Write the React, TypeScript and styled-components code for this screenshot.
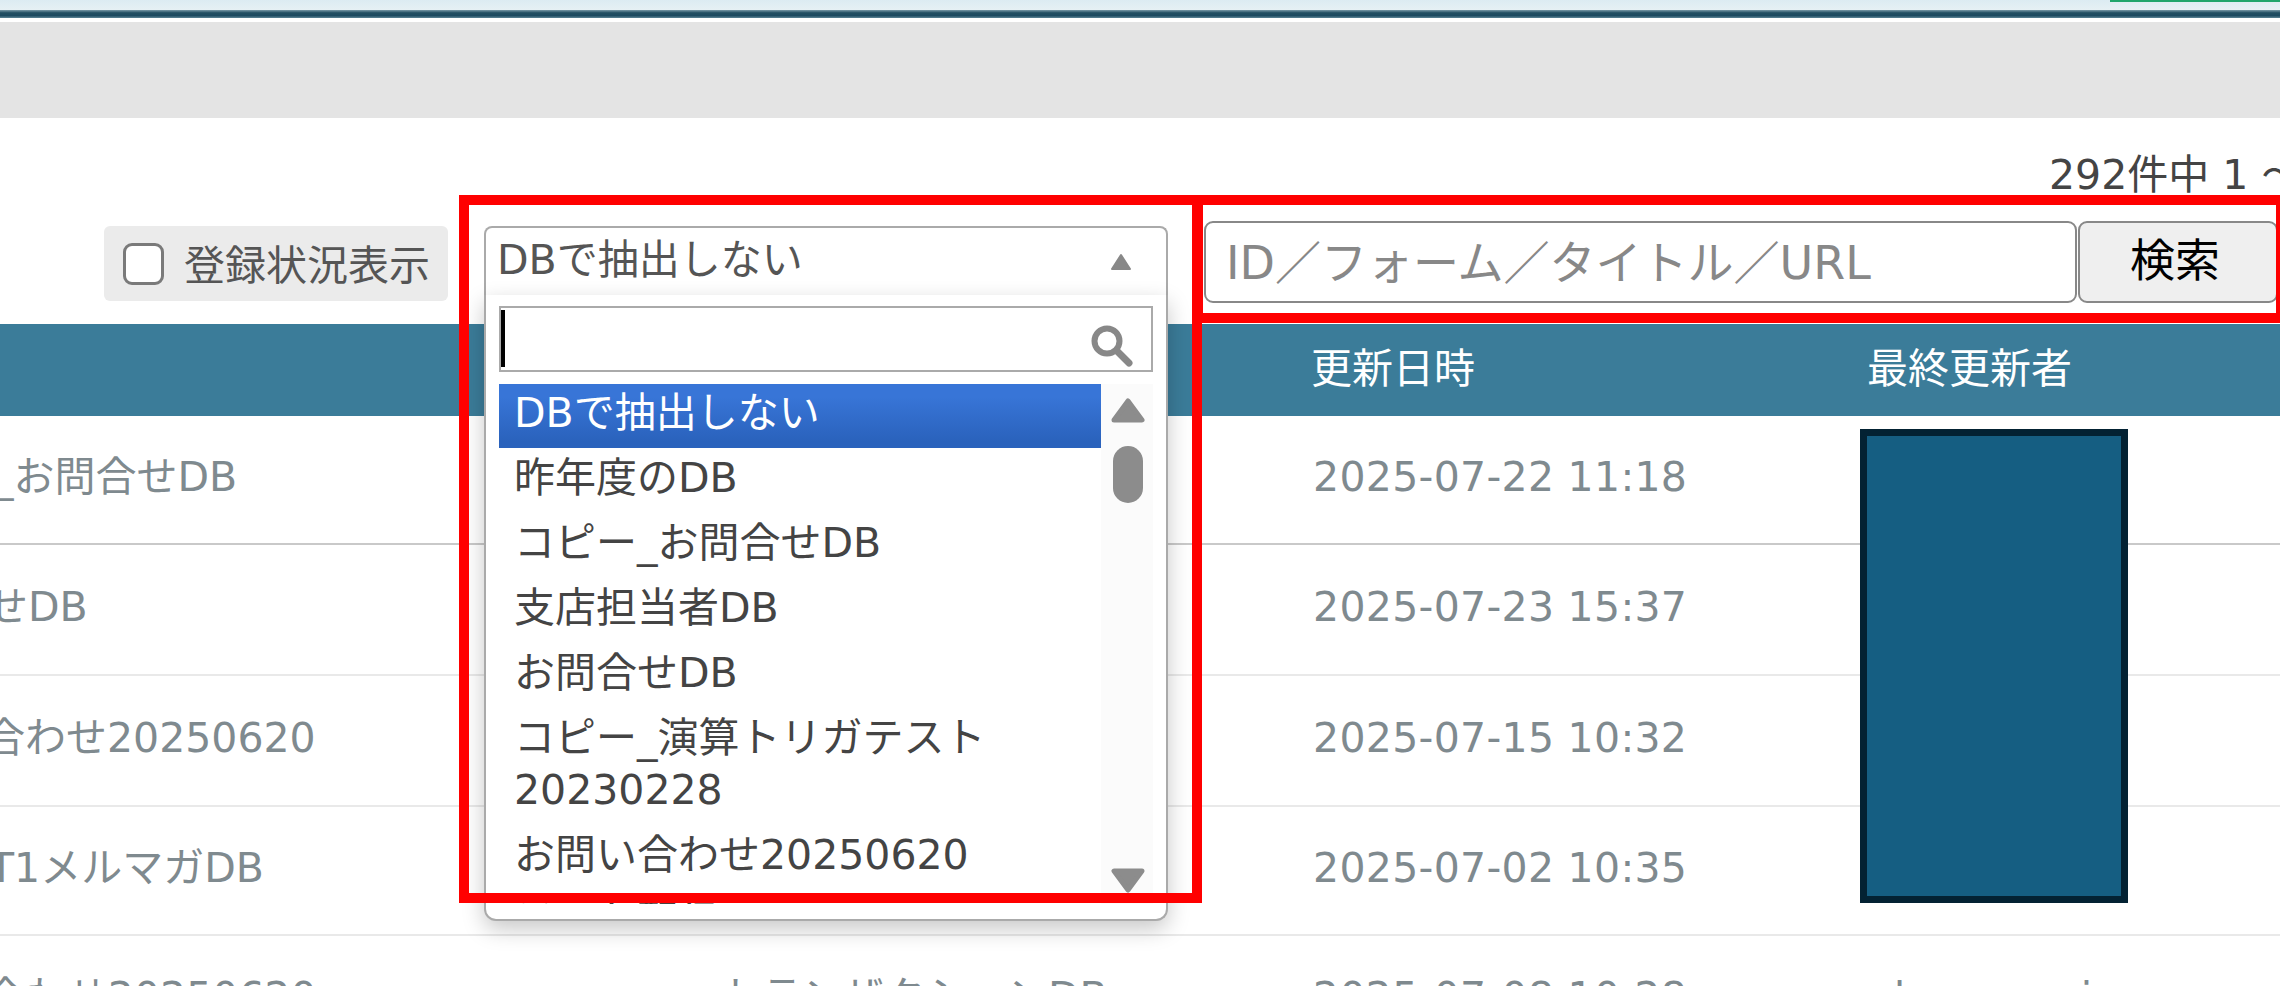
import React from "react";
import styled, { createGlobalStyle } from "styled-components";

const FONT = `"DejaVu Sans", "Noto Sans CJK JP", sans-serif`;

const GlobalStyle = createGlobalStyle`
  html, body { margin: 0; padding: 0; background: #fff; }
  body { font-family: ${FONT}; font-weight: 400; overflow: hidden; }
  * { box-sizing: border-box; }
`;

const Page = styled.div`
  position: relative;
  width: 2280px;
  height: 986px;
  overflow: hidden;
  background: #fff;
  font-size: 41px;
`;

const TopStrip = styled.div`
  height: 10px;
  display: flex;
  justify-content: flex-end;
  background: linear-gradient(#dcebf2, #e6f0f4);
`;
const GreenLine = styled.div`
  width: 170px;
  height: 2px;
  background: #1fa56b;
`;
const DarkBar = styled.div`
  height: 8px;
  background: linear-gradient(#7a9aa8, #234f63 35%, #1d4a60 70%, #5f8696);
`;
const GrayBand = styled.div`
  height: 96px;
  margin-top: 4px;
  background: #e4e4e4;
`;

const CountRow = styled.div`
  height: 103px;
  padding: 37px 0 0 2049px;
  line-height: 40px;
  color: #444;
  white-space: nowrap;
`;

const Toolbar = styled.div`
  height: 103px;
  padding-left: 104px;
  display: flex;
  align-items: flex-start;
`;
const Chip = styled.label`
  width: 344px;
  height: 75px;
  margin-top: 5px;
  padding: 0 0 3px 19px;
  display: flex;
  align-items: center;
  gap: 20px;
  background: #ebebeb;
  border-radius: 6px;
  color: #555;
  white-space: nowrap;
`;
const Box = styled.span`
  width: 41px;
  height: 42px;
  margin-top: 3px;
  flex: none;
  background: #fff;
  border: 3px solid #7a7a7a;
  border-radius: 9px;
`;

const SelectWrap = styled.div`
  position: relative;
  z-index: 2;
  width: 684px;
  height: 69px;
  margin: 5px 0 0 36px;
`;
const SelectHead = styled.div`
  height: 69px;
  padding: 0 34px 12px 11px;
  display: flex;
  align-items: center;
  justify-content: space-between;
  background: #fff;
  border: 2px solid #aaa;
  border-bottom: 0;
  border-radius: 8px 8px 0 0;
  color: #555;
`;
const TriangleIcon = styled.svg`
  margin-top: 12px;
`;
const Dropdown = styled.div`
  position: absolute;
  top: 69px;
  left: 0;
  width: 684px;
  height: 626px;
  padding: 11px 13px 0;
  background: #fff;
  border: 2px solid #aaa;
  border-top: 0;
  border-radius: 0 0 12px 12px;
  box-shadow: 0 8px 22px rgba(0, 0, 0, 0.22);
`;
const SearchBox = styled.div`
  height: 66px;
  padding: 2px 18px 3px 0;
  display: flex;
  justify-content: space-between;
  align-items: flex-end;
  border: 2px solid #aaa;
`;
const Caret = styled.span`
  align-self: stretch;
  width: 4px;
  background: #000;
`;
const ListArea = styled.div`
  height: 520px;
  margin-top: 12px;
  display: flex;
  overflow: hidden;
`;
const List = styled.div`
  width: 602px;
  flex: none;
`;
const Option = styled.div<{ $active?: boolean }>`
  padding: ${(p) => (p.$active ? "3px 15px 9px" : "4px 15px 9px")};
  line-height: 52px;
  color: ${(p) => (p.$active ? "#fff" : "#444")};
  background: ${(p) => (p.$active ? "linear-gradient(#3875d7 20%, #2a62bc 90%)" : "transparent")};
`;
const ScrollTrack = styled.div`
  width: 55px;
  flex: none;
  padding: 14px 0 11px 10px;
  display: flex;
  flex-direction: column;
  background: #fbfbfb;
`;
const Thumb = styled.div`
  width: 30px;
  height: 57px;
  margin: 23px 0 0 2px;
  background: #8c8c8c;
  border-radius: 15px;
`;
const DownArrow = styled.svg`
  margin-top: auto;
`;

const SearchGroup = styled.div`
  margin-left: 36px;
  display: flex;
  gap: 1px;
`;
const SearchInput = styled.div`
  width: 873px;
  height: 82px;
  padding: 0 0 7px 20px;
  display: flex;
  align-items: center;
  border: 2px solid #888;
  border-radius: 9px;
  color: #888;
  font-size: 46px;
  white-space: nowrap;
`;
const SearchButton = styled.div`
  width: 200px;
  height: 82px;
  padding: 0 0 9px 50px;
  display: flex;
  align-items: center;
  background: #efefef;
  border: 2px solid #888;
  border-radius: 9px;
  color: #000;
  font-size: 45px;
`;

const HeaderRow = styled.div`
  height: 92px;
  padding-bottom: 10px;
  display: grid;
  grid-template-columns: 720px 591px 556px 1fr;
  align-items: center;
  background: #3b7c99;
  color: #fff;
`;
const Row = styled.div<{ $h: number; $strong?: boolean }>`
  height: ${(p) => p.$h}px;
  padding-bottom: 6px;
  display: grid;
  grid-template-columns: 720px 592px 559px 1fr;
  align-items: center;
  overflow: hidden;
  border-bottom: 2px solid ${(p) => (p.$strong ? "#c9c9c9" : "#e9e9e9")};
  color: #7f8a8f;
  line-height: 52px;
  white-space: nowrap;
`;
const TitleCell = styled.div<{ $offset: number }>`
  margin-left: ${(p) => -p.$offset}px;
`;
const DateCell = styled.div`
  padding-left: 1px;
  letter-spacing: 0.3px;
`;
const UserCell = styled.div`
  padding-left: 23px;
`;

const Redaction = styled.div`
  position: absolute;
  z-index: 1;
  left: 1860px;
  top: 429px;
  width: 268px;
  height: 474px;
  background: #155e82;
  border: 7px solid #032233;
`;
const RedFrame = styled.div<{ $x: number; $w: number; $h: number }>`
  position: absolute;
  z-index: 3;
  left: ${(p) => p.$x}px;
  top: 195px;
  width: ${(p) => p.$w}px;
  height: ${(p) => p.$h}px;
  border: 10px solid #f00;
  pointer-events: none;
`;

const rows = [
  { h: 129, strong: true, title: "コピー_お問合せDB", offset: 130, kind: "", date: "2025-07-22 11:18", user: "" },
  { h: 131, title: "お問合せDB", offset: 136, kind: "", date: "2025-07-23 15:37", user: "" },
  { h: 131, title: "お問い合わせ20250620", offset: 139, kind: "", date: "2025-07-15 10:32", user: "" },
  { h: 129, title: "ST1メルマガDB", offset: 37, kind: "", date: "2025-07-02 10:35", user: "" },
  { h: 129, title: "お問い合わせ20250620", offset: 138, kind: "トランザクションDB", date: "2025-07-08 10:28", user: "kanezumi" },
];

const options = [
  "昨年度のDB",
  "コピー_お問合せDB",
  "支店担当者DB",
  "お問合せDB",
  "コピー_演算トリガテスト 20230228",
  "お問い合わせ20250620",
  "テスト配信DB",
];

export default function App() {
  return (
    <Page>
      <GlobalStyle />
      <TopStrip>
        <GreenLine />
      </TopStrip>
      <DarkBar />
      <GrayBand />
      <CountRow>292件中 1 ～ 20件</CountRow>
      <Toolbar>
        <Chip>
          <Box />
          登録状況表示
        </Chip>
        <SelectWrap>
          <SelectHead>
            DBで抽出しない
            <TriangleIcon width="22" height="18" viewBox="0 0 22 18">
              <path d="M11 2 L20 16 H2 Z" fill="#888" stroke="#888" strokeWidth="2" strokeLinejoin="round" />
            </TriangleIcon>
          </SelectHead>
          <Dropdown>
            <SearchBox>
              <Caret />
              <svg width="43" height="42" viewBox="0 0 43 42">
                <circle cx="17" cy="16" r="12.5" fill="none" stroke="#888" strokeWidth="6" />
                <path d="M27 26 L39 38" stroke="#888" strokeWidth="7" strokeLinecap="round" />
              </svg>
            </SearchBox>
            <ListArea>
              <List>
                <Option $active>DBで抽出しない</Option>
                {options.map((o) => (
                  <Option key={o}>{o}</Option>
                ))}
              </List>
              <ScrollTrack>
                <svg width="34" height="25" viewBox="0 0 34 25">
                  <path d="M17 3 L31 22 H3 Z" fill="#8c8c8c" stroke="#8c8c8c" strokeWidth="5" strokeLinejoin="round" />
                </svg>
                <Thumb />
                <DownArrow width="34" height="25" viewBox="0 0 34 25">
                  <path d="M3 3 H31 L17 22 Z" fill="#8c8c8c" stroke="#8c8c8c" strokeWidth="5" strokeLinejoin="round" />
                </DownArrow>
              </ScrollTrack>
            </ListArea>
          </Dropdown>
        </SelectWrap>
        <SearchGroup>
          <SearchInput>ID／フォーム／タイトル／URL</SearchInput>
          <SearchButton>検索</SearchButton>
        </SearchGroup>
      </Toolbar>
      <HeaderRow>
        <div />
        <div />
        <div>更新日時</div>
        <div>最終更新者</div>
      </HeaderRow>
      {rows.map((r) => (
        <Row key={r.date} $h={r.h} $strong={r.strong}>
          <TitleCell $offset={r.offset}>{r.title}</TitleCell>
          <div>{r.kind}</div>
          <DateCell>{r.date}</DateCell>
          <UserCell>{r.user}</UserCell>
        </Row>
      ))}
      <Redaction />
      <RedFrame $x={459} $w={743} $h={708} />
      <RedFrame $x={1193} $w={1093} $h={128} />
    </Page>
  );
}
